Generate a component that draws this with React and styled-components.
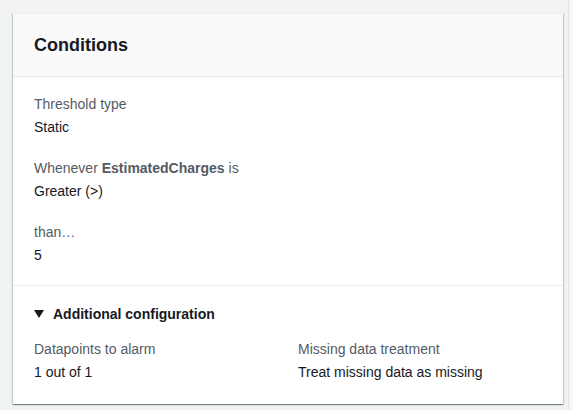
import React from 'react'
import styled, { createGlobalStyle } from 'styled-components'

const GlobalStyle = createGlobalStyle`
  html, body {
    margin: 0;
    padding: 0;
    background: #f2f3f3;
  }
  body {
    font-family: "Liberation Sans", Arial, sans-serif;
    color: #16191f;
  }
`

const Page = styled.div`
  display: flex;
  width: 573px;
  height: 410px;
  overflow: hidden;
`

const Main = styled.div`
  flex: 0 0 568px;
  padding: 13px 0 0 13px;
  box-sizing: border-box;
`

const SideStrip = styled.div`
  flex: 1 1 auto;
  border-left: 1px solid #dfe2e2;
  background: #f6f7f7;
`

const Card = styled.section`
  width: 550px;
  background: #ffffff;
  box-shadow: 0 1px 1px 0 rgba(0, 28, 36, 0.3), 1px 1px 1px 0 rgba(0, 28, 36, 0.15),
    -1px 1px 1px 0 rgba(0, 28, 36, 0.15);
  border-top: 1px solid #eaeded;
`

const Header = styled.header`
  height: 62px;
  display: flex;
  align-items: center;
  padding: 0 21px;
  background: #fafafa;
  border-bottom: 1px solid #eaeded;
`

const Title = styled.h2`
  margin: 0;
  font-size: 18px;
  font-weight: 700;
  color: #16191f;
  padding-top: 1px;
`

const Section = styled.div`
  display: flex;
  flex-direction: column;
  gap: 19px;
  padding: 16px 21px 19px;
  border-bottom: ${(p) => (p.divided ? '1px solid #eaeded' : 'none')};
`

const Field = styled.div`
  display: flex;
  flex-direction: column;
  gap: 1px;
`

const Label = styled.div`
  font-size: 14px;
  line-height: 22px;
  color: #545b64;

  b {
    font-weight: 700;
  }
`

const Value = styled.div`
  font-size: 14px;
  line-height: 22px;
  color: #16191f;
`

const Expander = styled.div`
  padding: 17px 21px 21px;
`

const ExpanderToggle = styled.div`
  display: flex;
  align-items: center;
  gap: 9px;
  height: 22px;
  font-size: 14px;
  font-weight: 700;
  color: #16191f;
  margin-bottom: 13px;
`

const Columns = styled.div`
  display: grid;
  grid-template-columns: 1fr 1fr;
  column-gap: 20px;
`

const Caret = () => (
  <svg width="10" height="8" viewBox="0 0 10 8">
    <path d="M0 0 H10 L5 8 Z" fill="#16191f" />
  </svg>
)

export default function App() {
  return (
    <Page>
      <GlobalStyle />
      <Main>
        <Card>
          <Header>
            <Title>Conditions</Title>
          </Header>
          <Section divided>
            <Field>
              <Label>Threshold type</Label>
              <Value>Static</Value>
            </Field>
            <Field>
              <Label>
                Whenever <b>EstimatedCharges</b> is
              </Label>
              <Value>Greater (&gt;)</Value>
            </Field>
            <Field>
              <Label>than…</Label>
              <Value>5</Value>
            </Field>
          </Section>
          <Expander>
            <ExpanderToggle>
              <Caret />
              Additional configuration
            </ExpanderToggle>
            <Columns>
              <Field>
                <Label>Datapoints to alarm</Label>
                <Value>1 out of 1</Value>
              </Field>
              <Field>
                <Label>Missing data treatment</Label>
                <Value>Treat missing data as missing</Value>
              </Field>
            </Columns>
          </Expander>
        </Card>
      </Main>
      <SideStrip />
    </Page>
  )
}
